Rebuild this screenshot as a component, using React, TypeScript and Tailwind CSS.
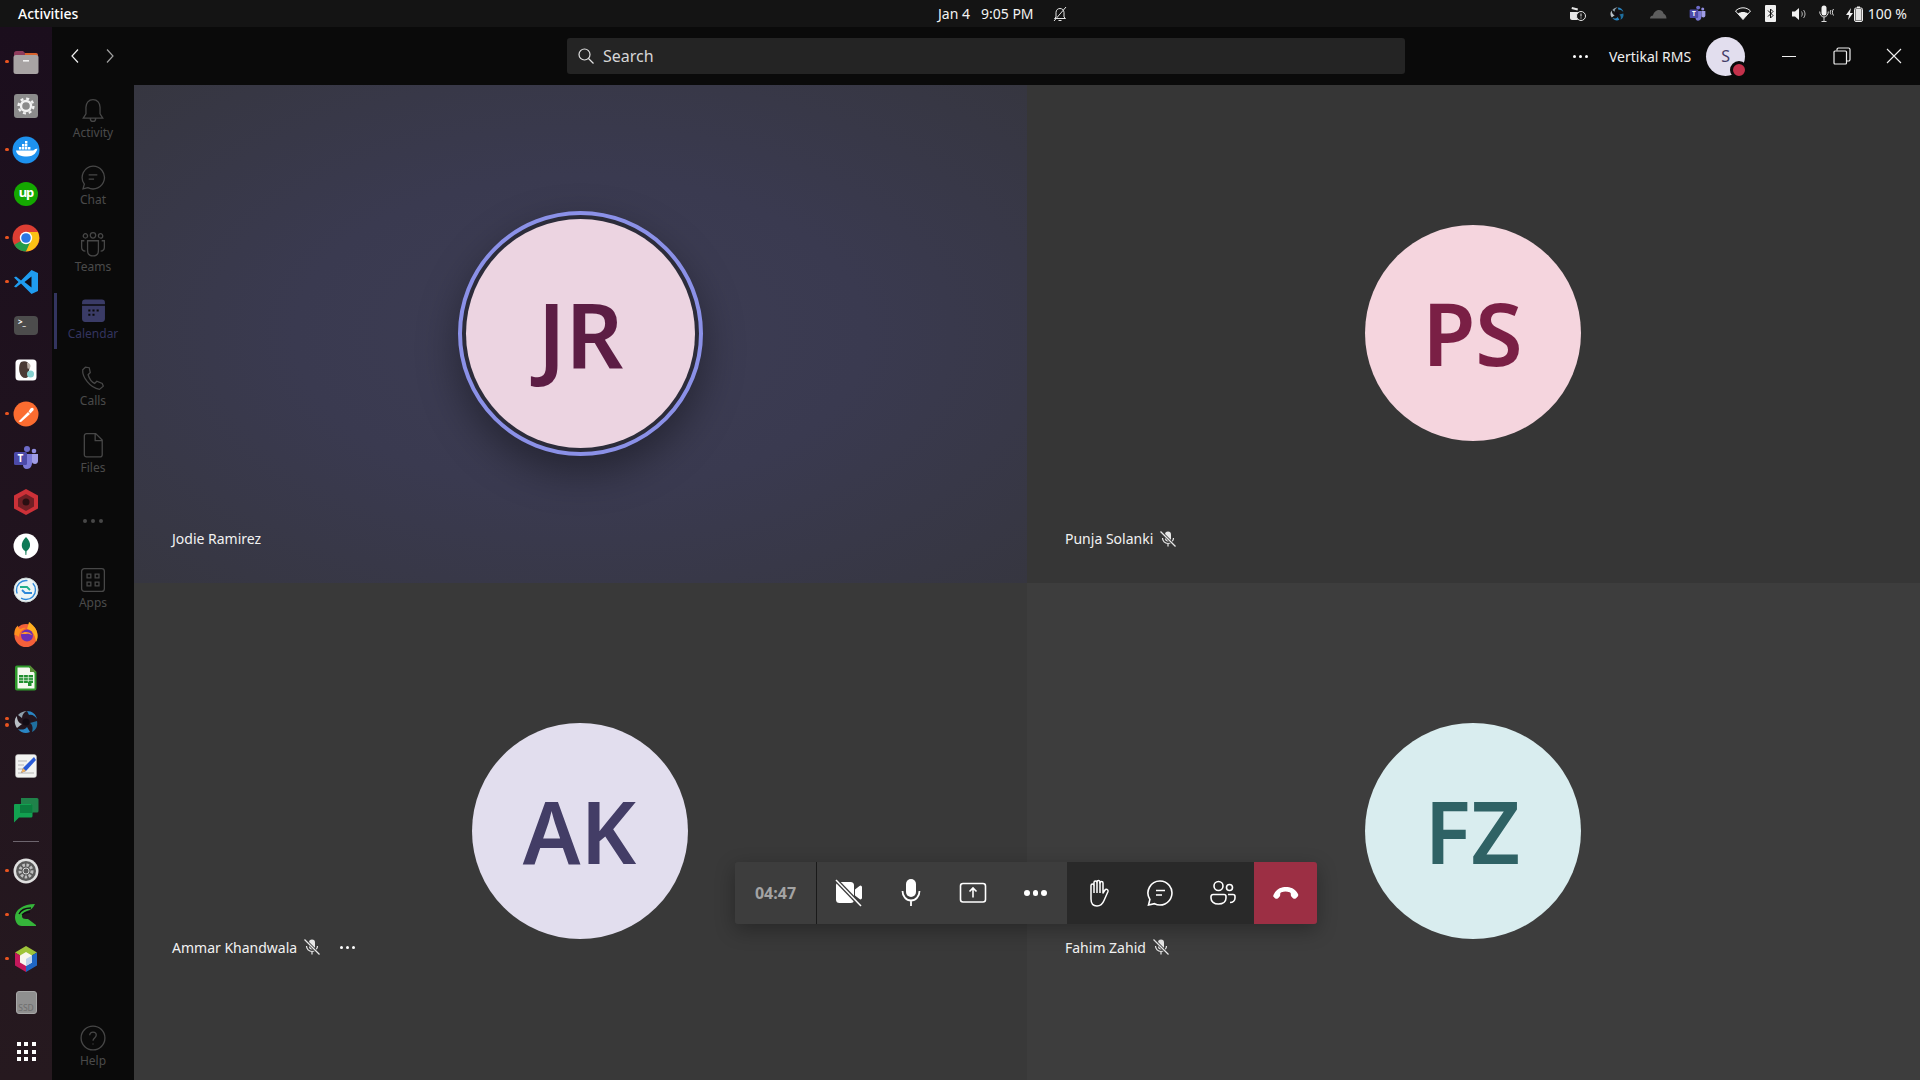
import type { ReactNode } from 'react';

const FONT = 'font-["Noto_Sans",sans-serif]';

// dock icons
function Folder() {
  return (
    <svg width="28" height="28" viewBox="0 0 28 28">
      <path d="M2 5.500Q2 3 4.500 3H11l2 2h11q2 0 2 2.500V12H2z" fill="#8e3b5c" />
      <path d="M13 5h11q2 0 2 2.500V9H13z" fill="#d9622b" />
      <rect x="1.500" y="7" width="25" height="19" rx="2.500" fill="#a8a4a4" />
      <rect x="11" y="12" width="6" height="1.600" fill="#f0f0f0" />
    </svg>
  );
}
function SettingsBox() {
  return (
    <svg width="26" height="26" viewBox="0 0 26 26">
      <rect x="1" y="1" width="24" height="24" rx="3" fill="#8b8b8b" />
      <circle cx="13" cy="13" r="5" fill="none" stroke="#f1f1f1" strokeWidth="2.400" />
      <circle cx="13" cy="13" r="7.400" fill="none" stroke="#f1f1f1" strokeWidth="2.400" strokeDasharray="3 2.800" />
    </svg>
  );
}
function Docker() {
  return (
    <svg width="28" height="28" viewBox="0 0 28 28">
      <circle cx="14" cy="14" r="13.500" fill="#1d91ee" />
      <path d="M4 14.500h17c1 0 1.600-.8 2-1.500 1 .2 1.800 0 2.400-.4-.5 3-3 8-10.400 8C9 20.600 4.500 19 4 14.500z" fill="#fff" />
      <path d="M7 11h2.400v2.600H7zM10 11h2.400v2.600H10zM13 11h2.400v2.600H13zM16 11h2.400v2.600H16zM10 8h2.400v2.400H10zM13 8h2.400v2.400H13zM13 5h2.400v2.400H13z" fill="#fff" />
    </svg>
  );
}
function Upwork() {
  return (
    <div className="w-6 h-6 rounded-full bg-[#14a800] flex items-center justify-center text-white text-[13px] font-bold leading-none tracking-[-1px] pb-0.5">
      up
    </div>
  );
}
function Chrome() {
  return (
    <svg width="28" height="28" viewBox="0 0 28 28">
      <circle cx="14" cy="14" r="13.500" fill="#dd3e33" />
      <path d="M14 14 2.300 20.800A13.500 13.500 0 0 0 14 27.500L21 14z" fill="#249c49" />
      <path d="M14 8h11.800A13.500 13.500 0 0 1 14 27.500L20 14z" fill="#fbc114" />
      <circle cx="14" cy="14" r="6.200" fill="#fff" />
      <circle cx="14" cy="14" r="4.800" fill="#2a78e4" />
    </svg>
  );
}
function VSCode() {
  return (
    <svg width="26" height="26" viewBox="0 0 26 26">
      <path d="M18.500 1 25 4v18l-6.500 3L8 14.500 3 18.500 1 17.500 5.500 13 1 8.500l2-1L8 11.500z" fill="#1f9cf0" />
      <path d="M18.500 7.500 11.500 13l7 5.500z" fill="#120b14" />
    </svg>
  );
}
function Terminal() {
  return (
    <div className="w-6 h-[19px] rounded-sm bg-[#4c4c4c] flex items-start pl-1 text-white text-[8px] leading-[12px] font-bold">
      &gt;_
    </div>
  );
}
function DBeaver() {
  return (
    <svg width="22" height="22" viewBox="0 0 22 22">
      <rect x="0.500" y="0.500" width="21" height="21" rx="3.500" fill="#fff" />
      <path d="M6 3c4-2 8 0 8.500 4 .3 3-1 5-1 8 0 2.500-1 4-3 4-3 0-5-2-6-6-.6-3-.5-8 1.500-10z" fill="#4a3a34" />
      <path d="M12 4c2-.5 3.500 1 3.500 3s-1.500 3-3 2.500z" fill="#b9aea5" />
      <circle cx="15.500" cy="15" r="3.500" fill="#86d0cf" />
    </svg>
  );
}
function Postman() {
  return (
    <svg width="26" height="26" viewBox="0 0 26 26">
      <circle cx="13" cy="13" r="12.500" fill="#fb6c30" />
      <path d="M5.500 20.500 15 11l2 2-9 8zM15.500 10.500l2-3c1-1 2.500-1 3 0s0 2-1 2.800L17.500 12.500z" fill="#fff" />
    </svg>
  );
}
function Teams({ size = 26 }: { size?: number }) {
  return (
    <svg width={size} height={size} viewBox="0 0 26 26">
      <circle cx="14" cy="4" r="3" fill="#6d6bc9" />
      <circle cx="21" cy="6" r="2.300" fill="#8f8cdd" />
      <path d="M10 9h9v9c0 3-2 6-5 6s-4-2-4-4z" fill="#7b79d6" />
      <path d="M19 9h6v7c0 2-1.500 3-3 3s-3-1-3-2z" fill="#a09de6" />
      <rect x="1" y="7" width="13" height="13" rx="1.500" fill="#4c4aa8" />
      <text x="7.500" y="17" textAnchor="middle" fontSize="10" fontWeight="700" fill="#fff">T</text>
    </svg>
  );
}
function RedHex() {
  return (
    <svg width="26" height="28" viewBox="0 0 26 28">
      <path d="M13 1 25 7.500v13L13 27 1 20.500v-13z" fill="#cc3138" />
      <path d="M13 6 21 10.500v8L13 23 5 18.500v-8z" fill="#6f1f24" />
      <circle cx="13" cy="14" r="3.500" fill="#2a0f12" />
    </svg>
  );
}
function Mongo() {
  return (
    <svg width="26" height="26" viewBox="0 0 26 26">
      <circle cx="13" cy="13" r="12.500" fill="#fff" />
      <path d="M13 4c3 3 4.500 6 4 9-.4 2.500-2 4-3.400 5l-.3 4h-.8l-.3-4C10.500 17 9 15.500 8.800 13 8.500 10 10 7 13 4z" fill="#0e7a56" />
    </svg>
  );
}
function Arrows() {
  return (
    <svg width="26" height="26" viewBox="0 0 26 26">
      <circle cx="13" cy="13" r="12" fill="#eef5f5" stroke="#c9d4d4" />
      <circle cx="13" cy="13" r="9.500" fill="none" stroke="#2f89d9" strokeWidth="1.400" strokeDasharray="20 6" />
      <path d="M7 10h7l3 3" fill="none" stroke="#1fae8a" strokeWidth="1.800" />
      <path d="M19 16h-7l-3-3" fill="none" stroke="#2f89d9" strokeWidth="1.800" />
    </svg>
  );
}
function Firefox() {
  return (
    <svg width="26" height="26" viewBox="0 0 26 26">
      <circle cx="13" cy="14.500" r="11.500" fill="#f4603a" />
      <path d="M16 1c3 2 8 6 8.500 13 .3 3-.5 5-1.500 7-1-8-4-12-9-13 1-3 1.500-5 2-7z" fill="#ffb020" />
      <path d="M1.500 14C1 9 3 6 5 4.500c0 2 1 3.500 3 3.500 1.500-1 3-1.500 5-1-4 2-7 4-7 9-1.500-1.500-3-2-4.500-2z" fill="#ff8f1f" />
      <circle cx="14" cy="14.500" r="6" fill="#6a2fb5" />
      <path d="M8 13c3-3 9-2.500 11.500 1.500C17 13 15 12.500 13 13z" fill="#ff9a2a" />
    </svg>
  );
}
function Calc() {
  return (
    <svg width="22" height="26" viewBox="0 0 22 26">
      <path d="M2 .500h13L21.500 7v16.500a2 2 0 0 1-2 2H2a2 2 0 0 1-2-2V2.500A2 2 0 0 1 2 .500z" fill="#2f9a2c" />
      <path d="M2.500 2.500h11.500l5.500 5.500v15.500h-17z" fill="#f4f8ef" />
      <path d="M15 .500 21.500 7H15z" fill="#5b8c38" />
      <path d="M4 10h14v8H4z" fill="#1f8f2f" />
      <path d="M4 12.700h14M4 15.300h14M8.600 10v8M13.300 10v8" stroke="#f4f8ef" strokeWidth="0.700" />
      <rect x="13" y="17" width="3.500" height="4" fill="#1f8f2f" />
    </svg>
  );
}
function Swirl({ size = 24 }: { size?: number }) {
  return (
    <svg width={size} height={size} viewBox="0 0 24 24">
      <circle cx="12" cy="12" r="3.500" fill="#120b14" />
      <path d="M13 1c5 0 9 3 10 8-2-3-5-5-8-4z" fill="#2a86c4" />
      <path d="M23 11c1 5-1 9-5 11 1-3 1-7-2-9z" fill="#1f6f9f" />
      <path d="M16 22c-4 2-9 1-12-3 3 1 7 1 9-2z" fill="#2a86c4" />
      <path d="M3 18C0 14 0 9 3 6c0 3 1 7 5 8z" fill="#b9c0c6" />
      <path d="M4 5c3-3 6-4 9-4-3 1-5 4-5 7z" fill="#8fa0ac" />
    </svg>
  );
}
function Editor() {
  return (
    <svg width="22" height="24" viewBox="0 0 22 24">
      <rect x="0.500" y="0.500" width="21" height="23" rx="2.500" fill="#f3f3f1" stroke="#bbb" strokeWidth="0.500" />
      <path d="M3 7h9M3 11h6M3 15h5M3 19h16" stroke="#b5b5b5" />
      <path d="M19 3 8 14l-2 5 5-2L21 6z" fill="#2a5bd7" />
      <path d="M8 14l-2 5 5-2z" fill="#f2b35c" />
    </svg>
  );
}
function GChat() {
  return (
    <svg width="26" height="26" viewBox="0 0 26 26">
      <path d="M8 1h16a1.500 1.500 0 0 1 1.500 1.500V14a1.500 1.500 0 0 1-1.500 1.500h-5V7H8z" fill="#1f9e55" opacity="0.800" />
      <path d="M2 7h16a1.500 1.500 0 0 1 1.500 1.500V19a1.500 1.500 0 0 1-1.500 1.500H6L1 25.500V8a1 1 0 0 1 1-1z" fill="#12a150" />
      <rect x="7" y="8" width="12.500" height="8" fill="#0b7d3e" />
    </svg>
  );
}
function GearRound() {
  return (
    <svg width="26" height="26" viewBox="0 0 26 26">
      <circle cx="13" cy="13" r="12.500" fill="#e0e0e0" />
      <circle cx="13" cy="13" r="10" fill="#5a5a5a" />
      <circle cx="13" cy="13" r="6" fill="none" stroke="#bdbdbd" strokeWidth="3" strokeDasharray="2.500 1.500" />
      <circle cx="13" cy="13" r="3" fill="#5a5a5a" stroke="#d5d5d5" />
    </svg>
  );
}
function GreenC() {
  return (
    <svg width="24" height="24" viewBox="0 0 24 24">
      <path d="M21 1c-2 4-4 6-8 7-3 1-5 3-5 5 0 3 3 3 6 3l8 6v1H8C3 23 1 18 1 14 1 7 9 1 21 1z" fill="#35b53a" />
      <path d="M5 11c2-4 7-6 12-6M8 12c2-2 5-3 8-3" stroke="#120b14" strokeWidth="1.300" fill="none" />
    </svg>
  );
}
function Cube() {
  return (
    <svg width="26" height="28" viewBox="0 0 26 28">
      <path d="M13 1 24 7.500 13 14 2 7.500z" fill="#9ec43a" />
      <path d="M2 7.500 13 14v13L2 20.500z" fill="#c2185b" />
      <path d="M24 7.500 13 14v13l11-6.500z" fill="#1f66c4" />
      <path d="M13 7 19 10.500v7L13 21 7 17.500v-7z" fill="#f7f7ef" />
      <path d="M13 14l6-3.500v7L13 21z" fill="#bcd3ec" />
    </svg>
  );
}
function Drive() {
  return (
    <div className="w-[21px] h-[23px] rounded-[3px] bg-[#8f8f8f] border border-[#a8a8a8] flex items-end justify-center text-[8.5px] leading-[11px] text-[#6e6e6e]">
      SSD
    </div>
  );
}
function AppGrid() {
  return (
    <div className="grid grid-cols-3 gap-[3.5px]">
      {[...Array(9)].map((_, i) => (
        <div key={i} className="w-[4px] h-[4px] bg-white" />
      ))}
    </div>
  );
}

function DockItem({ dots = 0, children }: { dots?: number; children: ReactNode }) {
  return (
    <div className="relative h-[44px] shrink-0 flex items-center justify-center">
      {dots > 0 && (
        <div className="absolute left-[5px] top-0 bottom-0 flex flex-col justify-center gap-[3px]">
          {[...Array(dots)].map((_, i) => (
            <div key={i} className="w-[3.5px] h-[3.5px] rounded-full bg-[#e95420]" />
          ))}
        </div>
      )}
      {children}
    </div>
  );
}

function Dock() {
  return (
    <div className="w-[52px] shrink-0 flex flex-col pt-[12.5px] bg-gradient-to-b from-[#1b0e1d] to-[#26191f]">
      <DockItem dots={1}><Folder /></DockItem>
      <DockItem><SettingsBox /></DockItem>
      <DockItem dots={1}><Docker /></DockItem>
      <DockItem><Upwork /></DockItem>
      <DockItem dots={1}><Chrome /></DockItem>
      <DockItem dots={1}><VSCode /></DockItem>
      <DockItem><Terminal /></DockItem>
      <DockItem><DBeaver /></DockItem>
      <DockItem dots={1}><Postman /></DockItem>
      <DockItem><Teams /></DockItem>
      <DockItem><RedHex /></DockItem>
      <DockItem><Mongo /></DockItem>
      <DockItem><Arrows /></DockItem>
      <DockItem><Firefox /></DockItem>
      <DockItem><Calc /></DockItem>
      <DockItem dots={2}><Swirl /></DockItem>
      <DockItem><Editor /></DockItem>
      <DockItem><GChat /></DockItem>
      <div className="h-px shrink-0 bg-[#6d656e] mx-[13px] mt-[9px] mb-[7px]" />
      <DockItem dots={1}><GearRound /></DockItem>
      <DockItem dots={1}><GreenC /></DockItem>
      <DockItem dots={1}><Cube /></DockItem>
      <DockItem><Drive /></DockItem>
      <div className="h-[54px] shrink-0 flex items-center justify-center"><AppGrid /></div>
    </div>
  );
}

// rail icons
const railIcons: Record<string, ReactNode> = {
  Activity: <path d="M12 2.500c-4 0-6.500 3-6.500 7v6L3 19.500h18L18.500 15.500v-6c0-4-2.500-7-6.500-7zM9.500 19.500c0 1.800 1 3 2.500 3s2.500-1.200 2.500-3" />,
  Chat: <path d="M12 2a10.500 10.500 0 1 1-4.800 19.800L2.800 23l1.200-4.400A10.500 10.500 0 0 1 12 2zM8 10h8M8 14h5" />,
  Teams: <path d="M5 6.500a2 2 0 1 0 0-4 2 2 0 0 0 0 4zM12 6.500a2.500 2.500 0 1 0 0-5 2.500 2.500 0 0 0 0 5zM19 6.500a2 2 0 1 0 0-4 2 2 0 0 0 0 4zM7 9h10v9c0 3-2 5-5 5s-5-2-5-5zM4 9H1.500v6c0 2 1.500 3.500 3.500 3.500M20 9h2.500v6c0 2-1.500 3.500-3.500 3.500" />,
  Calls: <path d="M5 2 2.500 4.500C2 11 9 21 18 22.500l3.500-3-1-2.500-5-2-2 2c-3-1.500-5-4.500-6-8l2-2L8.500 2.500z" />,
  Files: <path d="M4 3.500A2 2 0 0 1 6 1.500h8.500L20.500 7.500V21a2 2 0 0 1-2 2H6a2 2 0 0 1-2-2zM14 1.500V8h6.500" />,
  Apps: <path d="M4 1.500h16A2.500 2.500 0 0 1 22.500 4v16a2.500 2.500 0 0 1-2.500 2.500H4A2.500 2.500 0 0 1 1.500 20V4A2.500 2.500 0 0 1 4 1.500zM6.500 6.500h3.500V10H6.500zM14 6.500h3.500V10H14zM6.500 14h3.500v3.500H6.500zM14 14h3.500v3.500H14z" />,
  Help: <path d="M12 1a11 11 0 1 1 0 22 11 11 0 0 1 0-22zM9 9.500c0-1.800 1.300-3 3-3s3 1.200 3 2.800c0 2.700-3 2.700-3 5.200M12 17v1" />,
};

function RailItem({ name, active = false }: { name: string; active?: boolean }) {
  return (
    <div className="relative h-[67px] shrink-0 flex flex-col items-center">
      {active && <div className="absolute left-[2px] top-[2px] w-[3px] h-[56px] bg-[#33345f]" />}
      {active ? (
        <svg width="25" height="25" viewBox="0 0 24 24" className="mt-[7px] mb-[1px]">
          <path d="M4 1.500h16a3 3 0 0 1 3 3V6H1V4.500a3 3 0 0 1 3-3zM1 7.500h22V20a3 3 0 0 1-3 3H4a3 3 0 0 1-3-3z" fill="#3a3b66" />
          <path d="M7 11h2v2H7zM11 11h2v2h-2zM15 11h2v2h-2zM7 15h2v2H7zM11 15h2v2h-2z" fill="#0a0a0a" />
        </svg>
      ) : (
        <svg width="26" height="26" viewBox="0 0 24 24" fill="none" stroke="#474747" strokeWidth="1.200" className="mt-[7px]">
          {railIcons[name]}
        </svg>
      )}
      <span className={`text-[12px] leading-[16px] mt-[2px] ${active ? 'text-[#33345f]' : 'text-[#4a4a4a]'}`}>{name}</span>
    </div>
  );
}

function Rail() {
  return (
    <div className="w-[82px] shrink-0 bg-[#0a0a0a] flex flex-col pt-[5px]">
      <RailItem name="Activity" />
      <RailItem name="Chat" />
      <RailItem name="Teams" />
      <RailItem name="Calendar" active />
      <RailItem name="Calls" />
      <RailItem name="Files" />
      <div className="h-[68px] shrink-0 flex items-start justify-center gap-[4px] pt-[27px]">
        {[0, 1, 2].map((i) => (
          <div key={i} className="w-[4px] h-[4px] rounded-full bg-[#474747]" />
        ))}
      </div>
      <RailItem name="Apps" />
      <div className="mt-auto -mb-[5px]"><RailItem name="Help" /></div>
    </div>
  );
}

function MicOff({ size = 18 }: { size?: number }) {
  return (
    <svg width={size} height={size} viewBox="0 0 18 18" fill="none">
      <rect x="6" y="1.500" width="6" height="10" rx="3" fill="#e8e8e8" />
      <path d="M3.500 8c0 3 2.400 5.500 5.500 5.500S14.500 11 14.500 8M9 13.500V16.500" stroke="#e8e8e8" strokeWidth="1.200" />
      <path d="M1.500 1.500 16.500 16.500" stroke="#3a3a3a" strokeWidth="3" />
      <path d="M1.500 1.500 16.500 16.500" stroke="#e8e8e8" strokeWidth="1.200" />
    </svg>
  );
}

function Dots({ color = 'bg-white', size = 'w-[3.5px] h-[3.5px]' }: { color?: string; size?: string }) {
  return (
    <div className="flex gap-[3px]">
      <div className={`${size} rounded-full ${color}`} />
      <div className={`${size} rounded-full ${color}`} />
      <div className={`${size} rounded-full ${color}`} />
    </div>
  );
}

function Tile({
  initials,
  bg,
  fg,
  name,
  bottom,
  muted = false,
  more = false,
  active = false,
  tile,
}: {
  initials: string;
  bg: string;
  fg: string;
  name: string;
  bottom: string;
  muted?: boolean;
  more?: boolean;
  active?: boolean;
  tile: string;
}) {
  return (
    <div className={`relative flex items-center justify-center ${tile}`}>
      {active ? (
        <div className="w-[245px] h-[245px] rounded-full border-[4px] border-[#8b91e8] p-[4px] bg-[#2c2c3a] shadow-[0_16px_40px_rgba(0,0,0,0.38)]">
          <div className={`w-full h-full rounded-full flex items-center justify-center text-[90px] font-semibold leading-none ${bg} ${fg}`}>
            {initials}
          </div>
        </div>
      ) : (
        <div className={`w-[216px] h-[216px] rounded-full flex items-center justify-center text-[86px] font-semibold leading-none ${bg} ${fg}`}>
          {initials}
        </div>
      )}
      <div className={`absolute left-[38px] flex items-center h-[20px] text-[14px] text-[#f2f2f2] ${bottom}`}>
        <span>{name}</span>
        {muted && <span className="ml-[6px]"><MicOff /></span>}
        {more && <span className="ml-[19px]"><Dots size="w-[3px] h-[3px]" /></span>}
      </div>
    </div>
  );
}

function Ctl({ children }: { children: ReactNode }) {
  return <div className="w-[62.5px] h-full flex items-center justify-center">{children}</div>;
}

function CallControls() {
  return (
    <div className="absolute left-[601px] top-[777px] w-[582px] h-[62px] flex rounded-[3px] overflow-hidden shadow-[0_6px_20px_rgba(0,0,0,0.3)] text-white">
      <div className="w-[82px] bg-[#3d3d3d] border-r border-[#1a1a1a] flex items-center justify-center text-[16px] font-bold text-[#a3a3a3]">
        04:47
      </div>
      <div className="w-[249.5px] bg-[#3d3d3d] flex">
        <Ctl>
          <svg width="30" height="30" viewBox="0 0 30 30">
            <rect x="3" y="4" width="18" height="21" rx="3.500" fill="#fff" />
            <path d="M22 11.500 26.500 8a1.500 1.500 0 0 1 2.500 1v11a1.500 1.500 0 0 1-2.500 1L22 17.500z" fill="#fff" />
            <path d="M3 2 28 28" stroke="#3d3d3d" strokeWidth="4" />
            <path d="M3 2 28 28" stroke="#fff" strokeWidth="1.500" />
          </svg>
        </Ctl>
        <Ctl>
          <svg width="24" height="30" viewBox="0 0 24 30" fill="none">
            <rect x="7" y="1" width="10" height="18" rx="5" fill="#fff" />
            <path d="M3.500 13c0 5 3.500 9.500 8.500 9.500S20.500 18 20.500 13M12 22.500V28" stroke="#fff" strokeWidth="1.800" />
          </svg>
        </Ctl>
        <Ctl>
          <svg width="28" height="22" viewBox="0 0 28 22" fill="none" stroke="#fff" strokeWidth="1.600">
            <rect x="1.500" y="1.500" width="25" height="18.500" rx="2.500" />
            <path d="M14 15.500V6M10.500 9.500 14 6l3.500 3.500" />
          </svg>
        </Ctl>
        <Ctl><Dots size="w-[5.5px] h-[5.5px]" /></Ctl>
      </div>
      <div className="w-[187.5px] bg-[#292929] flex">
        <Ctl>
          <svg width="24" height="28" viewBox="0 0 24 28" fill="none" stroke="#fff" strokeWidth="1.500" strokeLinejoin="round">
            <path d="M5 15V6.500a1.500 1.500 0 0 1 3 0V3.500a1.500 1.500 0 0 1 3 0V3a1.500 1.500 0 0 1 3 0v1a1.500 1.500 0 0 1 3 0v10l2-3c1-1.500 3.500-.5 3 1.500l-4 9c-1.200 3-3 5.500-7 5.500-5 0-6-3-6-7z" />
            <path d="M8 6.500V14M11 3.500V14M14 3V14" />
          </svg>
        </Ctl>
        <Ctl>
          <svg width="26" height="26" viewBox="0 0 26 26" fill="none" stroke="#fff" strokeWidth="1.600">
            <path d="M13 1a12 12 0 1 1-5.500 22.700L1.500 25l1.400-5.500A12 12 0 0 1 13 1zM9 10.500h9M9 15h6" />
          </svg>
        </Ctl>
        <Ctl>
          <svg width="26" height="26" viewBox="0 0 26 26" fill="none" stroke="#fff" strokeWidth="1.600">
            <circle cx="8.500" cy="6" r="4.500" />
            <circle cx="19.500" cy="7.500" r="3" />
            <path d="M3 14.500h11a2 2 0 0 1 2 2V18c0 3.500-3 6-7.500 6S1 21.500 1 18v-1.500a2 2 0 0 1 2-2zM18 14.500h5a2 2 0 0 1 2 2V18c0 2.500-2 4.500-5 4.500" />
          </svg>
        </Ctl>
      </div>
      <div className="flex-1 bg-[#9c2f44] flex items-center justify-center">
        <svg width="26" height="14" viewBox="0 0 26 14">
          <path d="M1 8C4 2 9 1 13 1s9 1 12 7c.5 1 .2 2-.5 2.800l-1.500 1.400c-1 .8-2 .8-3 0l-1.500-1.500c-.7-.7-.8-1.500-.7-2.500.1-1-.3-1.600-1.300-2-2.500-.9-5.500-.9-8 0-1 .4-1.400 1-1.300 2 .1 1 0 1.800-.7 2.500L5 12.200c-1 .8-2 .8-3 0l-1.500-1.400C-.2 10 .5 9 1 8z" fill="#fff" />
        </svg>
      </div>
    </div>
  );
}

function TopBar() {
  return (
    <div className="h-[27px] shrink-0 bg-[#141414] flex items-center text-white">
      <div className="w-[938px] pl-[18px] text-[14px] font-medium">Activities</div>
      <div className="flex items-center text-[14px] text-[#f2f2f2]">
        <span>Jan 4</span>
        <span className="ml-[11px]">9:05 PM</span>
        <svg width="16" height="16" viewBox="0 0 16 16" fill="none" stroke="#e5e5e5" strokeWidth="1" className="ml-[18px]">
          <path d="M4 11V6.500C4 4 5.800 2.500 8 2.500s4 1.500 4 4V11l1.500 1.500h-11zM6.500 14.500h3M2 15 14 1" />
        </svg>
      </div>
      <div className="ml-auto flex items-center pr-[13px]">
        <svg width="18" height="16" viewBox="0 0 18 16" className="mr-[23px]">
          <path d="M1 6h9v6c0 1-1 2-2 2H3c-1 0-2-1-2-2zM3 1l6 1.500-.5 2L2.500 3z" fill="#e5e5e5" />
          <circle cx="12" cy="10" r="4.500" fill="#141414" stroke="#e5e5e5" />
          <path d="M12 7.500v3M12 11.500v1" stroke="#e5e5e5" />
        </svg>
        <span className="mr-[25px]"><Swirl size={14} /></span>
        <svg width="18" height="10" viewBox="0 0 18 10" className="mr-[22px]">
          <path d="M1 9.500c0-2 1.500-3 3-3 .5-3 3-5.500 6-5.500 2.500 0 4 1.500 4.500 3.500C16 5 17.500 7 17.500 9.500z" fill="#5d5d5d" />
        </svg>
        <span className="mr-[29px]"><Teams size={17} /></span>
        <svg width="16" height="13" viewBox="0 0 16 13" className="mr-[14px]">
          <path d="M8 12.500 .5 4C2.500 2 5 .8 8 .8s5.500 1.200 7.500 3.200z" fill="none" stroke="#f0f0f0" />
          <path d="M8 12.500 3 6.500c1.500-1 3-1.500 5-1.500s3.500.5 5 1.500z" fill="#f0f0f0" />
        </svg>
        <svg width="11" height="17" viewBox="0 0 11 17" className="mr-[16px]">
          <rect width="11" height="17" rx="1" fill="#f0f0f0" />
          <path d="M3 5.500 8 10.500 5.500 13V4L8 6.500 3 11.500" fill="none" stroke="#141414" />
        </svg>
        <svg width="15" height="14" viewBox="0 0 15 14" className="mr-[12px]">
          <path d="M0 4.500h3L7 1v12L3 9.500H0z" fill="#f0f0f0" />
          <path d="M9.500 4.500c1 1.500 1 3.500 0 5M11.500 3c2 2.500 2 5.500 0 8" fill="none" stroke="#b5b5b5" />
        </svg>
        <svg width="16" height="17" viewBox="0 0 16 17" className="mr-[11px]">
          <rect x="2.500" y="0.500" width="5" height="10" rx="2.500" fill="#f0f0f0" />
          <path d="M.7 6.500c0 3 1.800 5.500 4.300 5.500s4.300-2.500 4.300-5.500M5 12v4M2.500 16.500h5M12 5c-1 1.500-1 3 0 4.500M14.500 4c-1.500 2-1.500 4.500 0 6.500" fill="none" stroke="#f0f0f0" strokeWidth="0.900" />
        </svg>
        <svg width="17" height="16" viewBox="0 0 17 16" className="mr-[5px]">
          <path d="M5 2 0 9h3l-1 5 5-7H4z" fill="#f0f0f0" />
          <rect x="8.500" y="2" width="8" height="13.500" rx="1.500" fill="none" stroke="#f0f0f0" />
          <rect x="11" y="0.500" width="3" height="1.500" fill="#f0f0f0" />
          <rect x="9.500" y="3" width="6" height="11.500" fill="#e4e4e4" />
        </svg>
        <span className="text-[14px] text-[#f2f2f2]">100 %</span>
      </div>
    </div>
  );
}

function TitleBar() {
  return (
    <div className="h-[58px] shrink-0 bg-[#0a0a0a] flex items-center">
      <div className="w-[515px] flex items-center pl-[17px]">
        <svg width="12" height="16" viewBox="0 0 12 16" fill="none" stroke="#f0f0f0" strokeWidth="1.200">
          <path d="M9 1.500 3 8l6 6.500" />
        </svg>
        <svg width="12" height="16" viewBox="0 0 12 16" fill="none" stroke="#a0a0a0" strokeWidth="1.200" className="ml-[23px]">
          <path d="M3 1.500 9 8l-6 6.500" />
        </svg>
      </div>
      <div className="w-[838px] h-[36px] rounded-[3px] bg-[#242424] flex items-center pl-[10px] text-[16px] text-[#d6d6d6]">
        <svg width="18" height="18" viewBox="0 0 18 18" fill="none" stroke="#e0e0e0" strokeWidth="1.200">
          <circle cx="7.500" cy="7.500" r="5.500" />
          <path d="M11.500 11.500 16.500 16.500" />
        </svg>
        <span className="ml-[8px]">Search</span>
      </div>
      <div className="flex items-center text-white ml-[168px]">
        <Dots size="w-[3px] h-[3px]" />
        <span className="ml-[21px] text-[14px] text-[#f0f0f0]">Vertikal RMS</span>
        <div className="relative ml-[15px] w-[39px] h-[39px] rounded-full bg-[#e2deee] flex items-center justify-center text-[16px] text-[#433d66]">
          S
          <div className="absolute right-[-3px] bottom-[-3px] w-[18px] h-[18px] rounded-full bg-[#c4314b] border-[3px] border-[#0a0a0a]" />
        </div>
        <div className="ml-[37px] w-[14px] h-px bg-[#f0f0f0]" />
        <svg width="18" height="18" viewBox="0 0 18 18" fill="none" stroke="#f0f0f0" strokeWidth="1.200" className="ml-[37px]">
          <rect x="1" y="4" width="12.500" height="13" rx="1" />
          <path d="M4 3.500V2.500A1.500 1.500 0 0 1 5.500 1H15.500A1.500 1.500 0 0 1 17 2.500V12.500A1.500 1.500 0 0 1 15.500 14H14" />
        </svg>
        <svg width="16" height="16" viewBox="0 0 16 16" fill="none" stroke="#f0f0f0" strokeWidth="1.100" className="ml-[35px]">
          <path d="M1 1 15 15M15 1 1 15" />
        </svg>
      </div>
    </div>
  );
}

export default function App() {
  return (
    <div className={`w-[1920px] h-[1080px] overflow-hidden flex flex-col bg-[#0a0a0a] ${FONT}`}>
      <TopBar />
      <div className="flex flex-1 min-h-0">
        <Dock />
        <div className="flex-1 flex flex-col min-w-0">
          <TitleBar />
          <div className="flex flex-1 min-h-0">
            <Rail />
            <div className="relative flex-1 grid grid-cols-2 grid-rows-2">
              <Tile
                tile="bg-[radial-gradient(ellipse_at_center,#3d3d54_0%,#3a3a50_45%,#363640_100%)]"
                initials="JR"
                bg="bg-[#ecd4e1]"
                fg="text-[#5c1d44]"
                name="Jodie Ramirez"
                bottom="bottom-[34px]"
                active
              />
              <Tile
                tile="bg-[#363636] pr-[2px] pb-[2px]"
                initials="PS"
                bg="bg-[#f5d5de]"
                fg="text-[#7a1f45]"
                name="Punja Solanki"
                bottom="bottom-[34px]"
                muted
              />
              <Tile
                tile="bg-[#393939] pr-[2px]"
                initials="AK"
                bg="bg-[#e2deee]"
                fg="text-[#433d66]"
                name="Ammar Khandwala"
                bottom="bottom-[123px]"
                muted
                more
              />
              <Tile
                tile="bg-[#3d3d3d] pr-[2px]"
                initials="FZ"
                bg="bg-[#d9edef]"
                fg="text-[#2f6265]"
                name="Fahim Zahid"
                bottom="bottom-[123px]"
                muted
              />
              <CallControls />
            </div>
          </div>
        </div>
      </div>
    </div>
  );
}
